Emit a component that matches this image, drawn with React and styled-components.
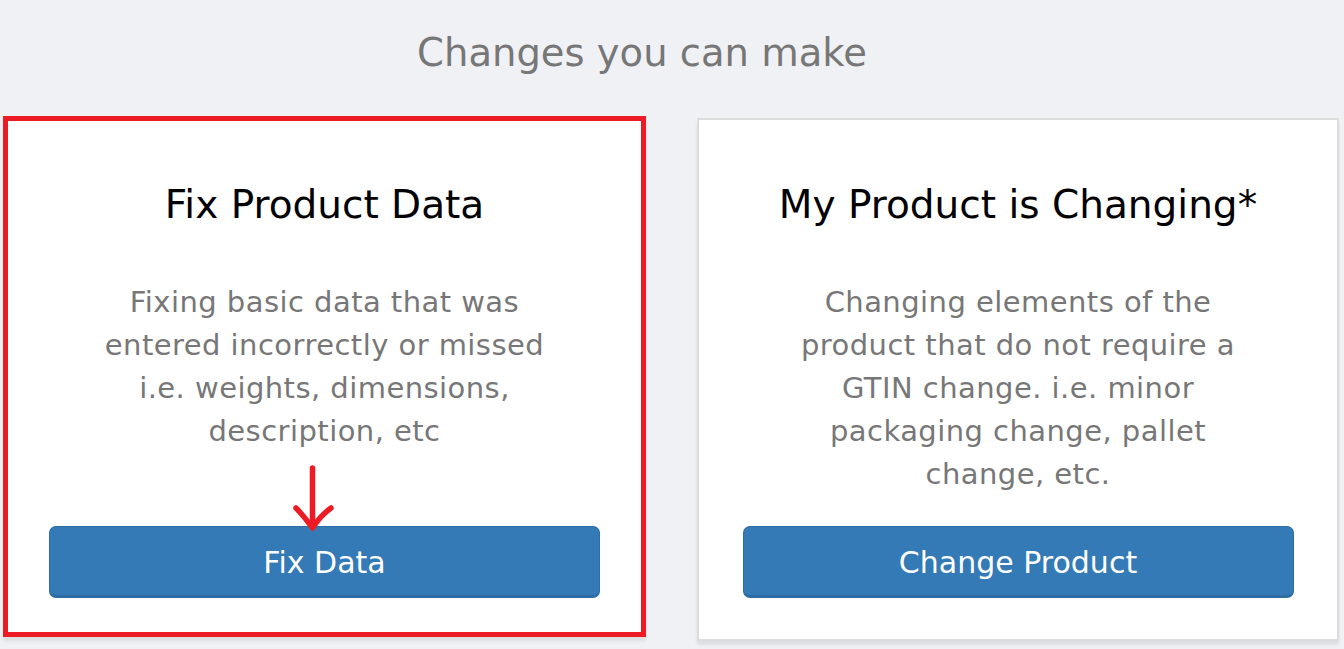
import React from 'react';
import styled, { createGlobalStyle } from 'styled-components';

const GlobalStyle = createGlobalStyle`
  html, body {
    margin: 0;
    padding: 0;
    background: #f0f1f5;
  }
`;

const Page = styled.div`
  min-height: 100vh;
  background: #f0f1f5;
  overflow: hidden;
  font-family: 'DejaVu Sans', Verdana, sans-serif;
`;

const Heading = styled.h2`
  margin: 0;
  padding: 30px 60px 0 0;
  height: 116px;
  box-sizing: border-box;
  text-align: center;
  font-weight: normal;
  font-size: 38.5px;
  line-height: 46px;
  color: #777777;
`;

const CardGrid = styled.div`
  display: grid;
  grid-template-columns: 643px 642px;
  column-gap: 51px;
  align-items: start;
  padding-left: 3px;
`;

const Card = styled.div`
  position: relative;
  display: flex;
  flex-direction: column;
  align-items: center;
  box-sizing: border-box;
  background: #ffffff;
  text-align: center;
  box-shadow: 0 4px 3px rgba(0, 0, 0, 0.08);
  ${(p) =>
    p.$highlight
      ? `
    height: 521px;
    border: 5px solid #ed1c24;
    padding: 60px 0 34px;
  `
      : `
    margin-top: 2px;
    height: 523px;
    border: 2px solid #dcdcdc;
    padding: 61px 0 41px;
  `}
`;

const Title = styled.h3`
  margin: 0;
  font-weight: normal;
  font-size: 39px;
  line-height: 48px;
  color: #000000;
`;

const Description = styled.p`
  margin: 52px 0 0;
  max-width: 470px;
  font-size: 29px;
  letter-spacing: 0.45px;
  line-height: 43px;
  color: #777777;
`;

const Button = styled.button`
  margin-top: auto;
  width: 551px;
  height: 72px;
  box-sizing: border-box;
  padding: 3px 0 0;
  border: 1px solid #2e6da4;
  border-bottom-width: 3px;
  border-radius: 7px;
  background: #337ab7;
  color: #ffffff;
  font-family: 'DejaVu Sans', Verdana, sans-serif;
  font-size: 30px;
  cursor: pointer;
`;

const Arrow = styled.svg`
  position: absolute;
  left: 282px;
  top: 343px;
  width: 46px;
  height: 68px;
`;

const DownArrow = () => (
  <Arrow viewBox="0 0 46 68">
    <path
      d="M22.5 4 V63 M6 44 Q14 52 22.5 64 Q30 52 41 44"
      fill="none"
      stroke="#ed1c24"
      strokeWidth="5.5"
      strokeLinecap="round"
      strokeLinejoin="round"
    />
  </Arrow>
);

const ChangeCard = ({ title, text, action, highlight }) => (
  <Card $highlight={highlight}>
    <Title>{title}</Title>
    <Description>{text}</Description>
    {highlight && <DownArrow />}
    <Button>{action}</Button>
  </Card>
);

const App = () => {
  return (
    <Page>
      <GlobalStyle />
      <Heading>Changes you can make</Heading>
      <CardGrid>
        <ChangeCard
          highlight
          title="Fix Product Data"
          text="Fixing basic data that was entered incorrectly or missed i.e. weights, dimensions, description, etc"
          action="Fix Data"
        />
        <ChangeCard
          title="My Product is Changing*"
          text="Changing elements of the product that do not require a GTIN change. i.e. minor packaging change, pallet change, etc."
          action="Change Product"
        />
      </CardGrid>
    </Page>
  );
};

export default App;
